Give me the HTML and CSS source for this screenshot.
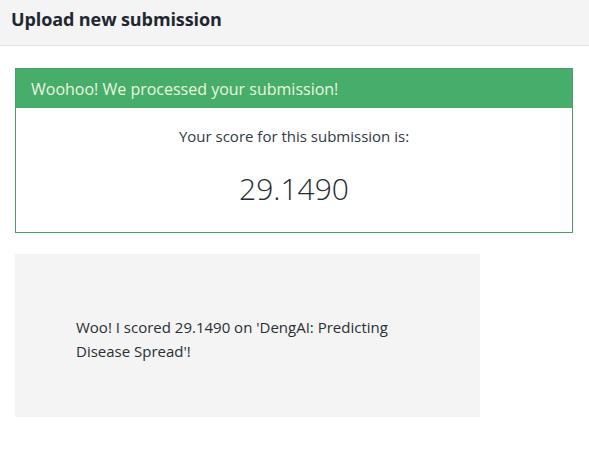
FILE: index.html
```html
<!DOCTYPE html>
<html>
<head>
<meta charset="utf-8">
<link rel="stylesheet" href="styles.css">
</head>
<body>
<header class="topbar"><h1 class="title">Upload new submission</h1></header>
<main class="content">
  <section class="result">
    <div class="result-head">Woohoo! We processed your submission!</div>
    <div class="result-body">
      <p class="score-label">Your score for this submission is:</p>
      <p class="score">29.1490</p>
    </div>
  </section>
  <section class="share">
    <p class="share-text">Woo! I scored 29.1490 on 'DengAI: Predicting Disease Spread'!</p>
  </section>
</main>
</body>
</html>
```
FILE: styles.css
```css
html, body { margin: 0; padding: 0; background: #fff; }
body { font-family: "Open Sans", "Liberation Sans", sans-serif; color: #2d3640; }
.topbar {
  height: 46px;
  box-sizing: border-box;
  background: #f4f4f4;
  border-bottom: 1px solid #e2e2e2;
  padding: 7px 11px 0;
}
.title { margin: 0; font-size: 18px; line-height: 24px; font-weight: 700; color: #1f2830; letter-spacing: -0.1px; }
.content { padding: 22px 16px 0 15px; }
.result { border: 1px solid #4b9e6a; }
.result-head {
  background: #46ad6b;
  color: #eaf6dc;
  height: 39px;
  display: flex;
  align-items: center;
  padding: 0 15px;
  font-size: 16px;
}
.result-body { text-align: center; padding: 17px 0 23px; }
.score-label { margin: 0; font-size: 15px; line-height: 22px; color: #2f3a46; }
.score { margin: 22px 0 0; font-size: 30px; line-height: 40px; font-weight: 300; color: #222a33; }
.share {
  margin-top: 21px;
  width: 465px;
  height: 163px;
  background: #f4f4f4;
  display: flex;
  align-items: center;
  padding: 6px 61px 0;
  box-sizing: border-box;
}
.share-text { margin: 0; font-size: 15px; line-height: 24px; color: #2a2f35; width: 330px; }
```
